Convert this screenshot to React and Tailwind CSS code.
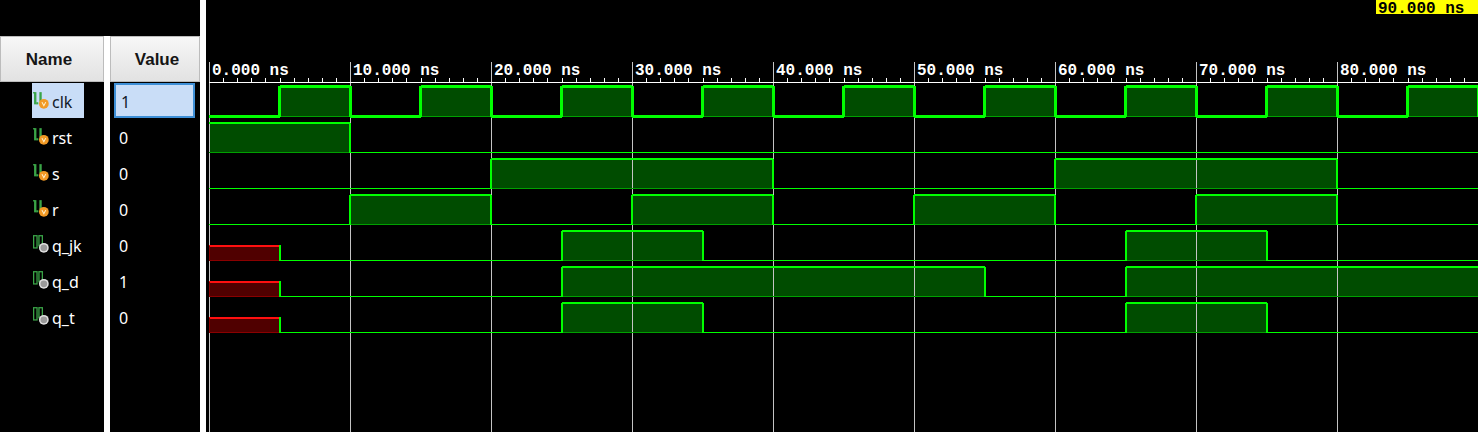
import React from "react";

const PX_PER_NS = 14.1;
const X0 = 209;
const T = (ns) => X0 + ns * PX_PER_NS;

const clkSegs = [];
for (let k = 0; k < 10; k++) {
  clkSegs.push([10 * k, 10 * k + 5, "0"]);
  clkSegs.push([10 * k + 5, 10 * k + 10, "1"]);
}

const signals = [
  { name: "clk", value: "1", kind: "in", selected: true, segs: clkSegs },
  { name: "rst", value: "0", kind: "in", segs: [[0, 10, "1"], [10, 95, "0"]] },
  { name: "s", value: "0", kind: "in", segs: [[0, 20, "0"], [20, 40, "1"], [40, 60, "0"], [60, 80, "1"], [80, 95, "0"]] },
  {
    name: "r",
    value: "0",
    kind: "in",
    segs: [[0, 10, "0"], [10, 20, "1"], [20, 30, "0"], [30, 40, "1"], [40, 50, "0"], [50, 60, "1"], [60, 70, "0"], [70, 80, "1"], [80, 95, "0"]],
  },
  { name: "q_jk", value: "0", kind: "out", segs: [[0, 5, "X"], [5, 25, "0"], [25, 35, "1"], [35, 65, "0"], [65, 75, "1"], [75, 95, "0"]] },
  { name: "q_d", value: "1", kind: "out", segs: [[0, 5, "X"], [5, 25, "0"], [25, 55, "1"], [55, 65, "0"], [65, 95, "1"]] },
  { name: "q_t", value: "0", kind: "out", segs: [[0, 5, "X"], [5, 25, "0"], [25, 35, "1"], [35, 65, "0"], [65, 75, "1"], [75, 95, "0"]] },
];

// little port glyph shown before each signal name
const SignalIcon = ({ kind }) => (
  <svg width="17" height="20" viewBox="0 0 16 18.8" className="shrink-0">
    {kind === "in" ? (
      <>
        <rect x="0" y="2" width="2" height="1.2" fill="#3aa447" />
        <rect x="1" y="2" width="2.2" height="11.5" fill="#3aa447" />
        <rect x="3" y="11.5" width="2" height="2" fill="#3aa447" />
        <rect x="6" y="2" width="2.2" height="9" fill="#3aa447" />
        <circle cx="10.2" cy="13" r="4.6" fill="#f29a26" />
        <path d="M8.4 11.4 L10.2 14.8 L12 11.4" stroke="#fff2d0" strokeWidth="1" fill="none" />
      </>
    ) : (
      <>
        <rect x="0.6" y="1.6" width="3.2" height="11.5" fill="none" stroke="#3aa447" strokeWidth="1.2" />
        <rect x="5.6" y="1.6" width="3.2" height="9.5" fill="none" stroke="#3aa447" strokeWidth="1.2" />
        <circle cx="10.2" cy="13" r="4.6" fill="#e0e0e0" />
        <circle cx="10.2" cy="13" r="3.2" fill="#9a9a9a" />
      </>
    )}
  </svg>
);

const Wave = ({ sig, i }) => {
  const top = sig.selected ? 86.5 : 87 + 36 * i;
  const low = 116.5 + 36 * i;
  const w = sig.selected ? 3 : 2;
  const lowW = sig.selected ? 3 : 1;
  const bright = "#00ff00";
  const els = [];
  let prevY = null;
  sig.segs.forEach(([a, b, v], k) => {
    const x1 = T(a);
    const x2 = Math.min(T(b), 1490);
    if (v === "X") {
      const xt = low - 15;
      els.push(<rect key={`xf${k}`} x={x1} y={xt} width={x2 - x1} height={low - xt} fill="#500000" />);
      els.push(<line key={`xt${k}`} x1={x1} x2={x2} y1={xt + 0.5} y2={xt + 0.5} stroke="#ff1010" strokeWidth="2" />);
      els.push(<line key={`xb${k}`} x1={x1} x2={x2} y1={low - 0.5} y2={low - 0.5} stroke="#8a0000" strokeWidth="1" />);
      els.push(<line key={`xl${k}`} x1={x1 + 0.5} x2={x1 + 0.5} y1={xt} y2={low} stroke="#8a0000" strokeWidth="1" />);
      prevY = xt;
      return;
    }
    const y = v === "1" ? top : low;
    if (v === "1") {
      els.push(<line key={`b${k}`} x1={x1} x2={x2} y1={low - 0.5} y2={low - 0.5} stroke="#00a000" strokeWidth="1" />);
    }
    if (prevY !== null && prevY !== y) {
      els.push(
        <line key={`v${k}`} x1={x1} x2={x1} y1={Math.min(prevY, y) - 0.5} y2={Math.max(prevY, y) + 0.5} stroke={bright} strokeWidth={w} />
      );
    }
    els.push(<line key={`h${k}`} x1={x1} x2={x2} y1={y} y2={y} stroke={bright} strokeWidth={v === "1" ? w : lowW} />);
    prevY = y;
  });
  return <g shapeRendering="crispEdges">{els}</g>;
};

const WaveFills = ({ sig, i }) => {
  const top = sig.selected ? 86.5 : 87 + 36 * i;
  const low = 116.5 + 36 * i;
  return sig.segs
    .filter((s) => s[2] === "1")
    .map(([a, b], k) => (
      <rect key={k} x={T(a)} y={top} width={Math.min(T(b), 1490) - T(a)} height={low - top} fill="#004c00" />
    ));
};

const WaveView = () => {
  const majors = [0, 1, 2, 3, 4, 5, 6, 7, 8, 9];
  const minors = [];
  for (let n = 1; n < 90; n++) if (n % 10 !== 0) minors.push(n);
  return (
    <svg width="1272" height="432" viewBox="206 0 1272 432" className="block shrink-0">
      <rect x="206" y="0" width="1272" height="432" fill="#000" />
      {signals.map((s, i) => (
        <WaveFills key={s.name} sig={s} i={i} />
      ))}
      <g shapeRendering="crispEdges">
        {majors.map((k) => (
          <line key={k} x1={Math.round(T(10 * k)) + 0.5} x2={Math.round(T(10 * k)) + 0.5} y1="62" y2="432" stroke="#c4c4c4" strokeWidth="1" />
        ))}
        <line x1={X0} x2="1478" y1="82.5" y2="82.5" stroke="#ffffff" strokeWidth="1" />
        {minors.map((n) => (
          <line key={n} x1={Math.round(T(n)) + 0.5} x2={Math.round(T(n)) + 0.5} y1="78" y2="82" stroke="#ffffff" strokeWidth="1" />
        ))}
      </g>
      {majors.slice(0, 9).map((k) => (
        <text
          key={k}
          x={Math.round(T(10 * k)) + 3}
          y="75"
          fill="#ffffff"
          fontFamily="'Liberation Mono', monospace"
          fontWeight="bold"
          fontSize="16"
        >
          {`${10 * k}.000 ns`}
        </text>
      ))}
      {signals.map((s, i) => (
        <Wave key={s.name} sig={s} i={i} />
      ))}
      <rect x="1376" y="0" width="102" height="14" fill="#ffff00" />
      <text x="1378" y="13" fill="#000" fontFamily="'Liberation Mono', monospace" fontWeight="bold" fontSize="16">
        90.000 ns
      </text>
    </svg>
  );
};

export default function App() {
  return (
    <div className="flex h-[432px] w-[1478px] overflow-hidden bg-black font-['Noto_Sans',sans-serif]">
      <div className="flex w-[200px] shrink-0 flex-col">
        <div className="h-[36px] shrink-0" />
        <div className="flex flex-1">
          {/* Name column */}
          <div className="flex w-[104px] flex-col">
            <div className="flex h-[46px] items-center justify-center border border-[#bcbcbc] bg-gradient-to-b from-[#f7f7f7] to-[#e2e2e2] pr-[6px] pt-[2px] font-['Liberation_Sans',sans-serif] text-[17px] font-bold text-[#151515]">
              Name
            </div>
            {signals.map((s) => (
              <div key={s.name} className="flex h-[36px] items-center pl-[32px]">
                <div
                  className={`flex h-[35px] items-center gap-[2px] pl-[1px] pr-[12px] text-[16px] ${
                    s.selected ? "bg-[#c9ddf7] text-[#101828]" : "text-white"
                  }`}
                >
                  <SignalIcon kind={s.kind} />
                  <span className="mt-[3px] leading-none">{s.name}</span>
                </div>
              </div>
            ))}
          </div>
          <div className="w-[6px] bg-white" />
          {/* Value column */}
          <div className="flex w-[90px] flex-col">
            <div className="flex h-[46px] items-center justify-center border border-[#bcbcbc] bg-gradient-to-b from-[#f7f7f7] to-[#e2e2e2] pl-[4px] pt-[2px] font-['Liberation_Sans',sans-serif] text-[17px] font-bold text-[#151515]">
              Value
            </div>
            {signals.map((s) => (
              <div key={s.name} className="flex h-[36px] items-center pl-[4px]">
                {s.selected ? (
                  <div className="flex h-[35px] w-[81px] items-center border-2 border-[#3e8fd6] bg-[#c9ddf7] pl-[5px] pt-[3px] text-[16px] text-[#101828]">
                    {s.value}
                  </div>
                ) : (
                  <span className="mt-[3px] pl-[5px] text-[16px] text-white">{s.value}</span>
                )}
              </div>
            ))}
          </div>
        </div>
      </div>
      <div className="w-[6px] shrink-0 bg-white" />
      <WaveView />
    </div>
  );
}
